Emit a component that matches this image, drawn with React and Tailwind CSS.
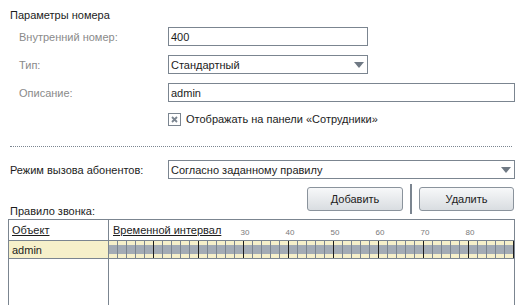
import React from "react";

const cells = Array.from({ length: 46 }, (_, i) => i);
const ticks = [30, 40, 50, 60, 70, 80];

function Field({ label, children }) {
  return (
    <div className="flex items-center">
      <div className="w-[168px] pl-[19px] text-[#8a8a8a]">{label}</div>
      {children}
    </div>
  );
}

function Arrow() {
  return (
    <svg width="10" height="6" viewBox="0 0 10 6" className="shrink-0">
      <path d="M0 0h10L5 6z" fill="#6f7984" />
    </svg>
  );
}

export default function App() {
  return (
    <div className="w-[521px] h-[305px] overflow-hidden bg-white text-[11px] leading-[14px] text-[#1c1c1c] font-['Liberation_Sans',Arial,sans-serif] flex flex-col">
      <div className="pl-[10px] pt-[8px]">Параметры номера</div>

      {/* Parameters */}
      <div className="mt-[5px] flex flex-col gap-[9px]">
        <Field label="Внутренний номер:">
          <div className="w-[200px] h-[19px] border border-[#7b8590] px-[2px] flex items-center">400</div>
        </Field>
        <Field label="Тип:">
          <div className="w-[200px] h-[19px] border border-[#7b8590] pl-[2px] pr-[3px] flex items-center justify-between">
            <span>Стандартный</span>
            <Arrow />
          </div>
        </Field>
        <Field label="Описание:">
          <div className="w-[347px] h-[19px] border border-[#7b8590] px-[2px] flex items-center">admin</div>
        </Field>
      </div>

      <div className="mt-[10px] pl-[168px] flex items-center gap-[5px]">
        <div className="w-[13px] h-[13px] border border-[#7b8590] flex items-center justify-center">
          <svg width="7" height="7" viewBox="0 0 7 7">
            <path d="M1 1l5 5M6 1L1 6" stroke="#7b8590" strokeWidth="1.8" />
          </svg>
        </div>
        <span>Отображать на панели «Сотрудники»</span>
      </div>

      <div className="mt-[20px] ml-[10px] w-[502px] border-t border-dotted border-[#7b8590]" />

      {/* Call mode */}
      <div className="mt-[13px] flex items-center">
        <div className="w-[168px] pl-[10px]">Режим вызова абонентов:</div>
        <div className="w-[347px] h-[19px] border border-[#7b8590] pl-[2px] pr-[3px] flex items-center justify-between">
          <span>Согласно заданному правилу</span>
          <Arrow />
        </div>
      </div>

      <div className="mt-[8px] h-[32px] flex">
        <div className="flex-1 self-end pl-[10px] pb-[1px]">Правило звонка:</div>
        <div className="flex items-start mr-[7px]">
          <button className="w-[96px] h-[24px] rounded-[3px] border border-[#8a939c] bg-gradient-to-b from-[#f7f8f9] to-[#d9dde1] text-[#222]">
            Добавить
          </button>
          <div className="mx-[7px] -mt-[3px] w-[2px] h-[30px] bg-[#7b8590]" />
          <button className="w-[95px] h-[24px] rounded-[3px] border border-[#8a939c] bg-gradient-to-b from-[#f7f8f9] to-[#d9dde1] text-[#222]">
            Удалить
          </button>
        </div>
      </div>

      {/* Table */}
      <div className="ml-[8px] w-[507px] flex-1 border-t border-x border-[#7b8590] flex">
        <div className="w-[100px] border-r border-[#7b8590] flex flex-col">
          <div className="h-[21px] border-b border-[#7b8590] pl-[3px] flex items-center">
            <span className="underline">Объект</span>
          </div>
          <div className="h-[18px] border-b border-[#7b8590] bg-[#f6f0ca] pl-[3px] flex items-center">admin</div>
        </div>
        <div className="flex-1 min-w-0 flex flex-col overflow-hidden">
          <div className="relative h-[21px] border-b border-[#7b8590] pl-[4px] flex items-center">
            <span className="underline">Временной интервал</span>
            {ticks.map((t) => (
              <span
                key={t}
                className="absolute top-[8px] text-[8px] leading-[9px] text-[#7a7a7a] -translate-x-1/2"
                style={{ left: 136 + ((t - 30) / 10) * 45 }}
              >
                {t}
              </span>
            ))}
          </div>
          <div className="h-[18px] border-b border-[#7b8590] flex bg-[#f6f0ca]">
            {cells.map((i) => (
              <div
                key={i}
                className={
                  (i + 1) % 5 === 0
                    ? "w-[9px] shrink-0 h-full border-r border-[#1e1e1e] flex items-center"
                    : "w-[9px] shrink-0 h-full border-r border-[#7b8590] flex items-center"
                }
              >
                <div className="w-full h-[9px] bg-[#a3abb5]" />
              </div>
            ))}
          </div>
        </div>
      </div>
    </div>
  );
}
